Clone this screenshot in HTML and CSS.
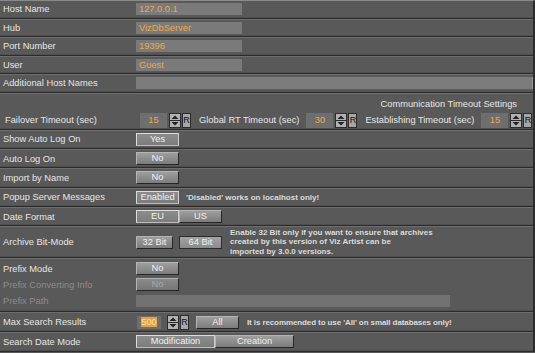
FILE: index.html
```html
<!DOCTYPE html>
<html lang="en">
  <head>
    <meta charset="utf-8" />
    <title>Database Settings</title>
    <link rel="stylesheet" href="styles.css">
  </head>
  <body>
    <div class="panel">
      <div class="row"><div class="label">Host Name</div><div class="field">127.0.0.1</div></div>
      <div class="row"><div class="label">Hub</div><div class="field">VizDbServer</div></div>
      <div class="row"><div class="label">Port Number</div><div class="field">19396</div></div>
      <div class="row"><div class="label">User</div><div class="field">Guest</div></div>
      <div class="row"><div class="label">Additional Host Names</div><div class="field wide"></div></div>

      <!-- timeouts -->
      <div class="row comm">
        <div class="comm-title">Communication Timeout Settings</div>
        <div class="comm-line">
          <span class="label sub">Failover Timeout (sec)</span>
          <span class="spin">
            <span class="num">15</span>
            <svg class="arrows" width="12" height="15" viewBox="0 0 12 15"><rect x="0.5" y="0.5" width="11" height="14" fill="#b2b2b2" stroke="#2c2c2c"/><line x1="1" y1="7.5" x2="11" y2="7.5" stroke="#2c2c2c"/><path d="M2.5 6 L6 2.5 L9.5 6Z" fill="#222"/><path d="M2.5 9 L6 12.5 L9.5 9Z" fill="#222"/></svg>
            <span class="reset">R</span>
          </span>
          <span class="inline-label">Global RT Timeout (sec)</span>
          <span class="spin">
            <span class="num">30</span>
            <svg class="arrows" width="12" height="15" viewBox="0 0 12 15"><rect x="0.5" y="0.5" width="11" height="14" fill="#b2b2b2" stroke="#2c2c2c"/><line x1="1" y1="7.5" x2="11" y2="7.5" stroke="#2c2c2c"/><path d="M2.5 6 L6 2.5 L9.5 6Z" fill="#222"/><path d="M2.5 9 L6 12.5 L9.5 9Z" fill="#222"/></svg>
            <span class="reset">R</span>
          </span>
          <span class="inline-label">Establishing Timeout (sec)</span>
          <span class="spin">
            <span class="num">15</span>
            <svg class="arrows" width="12" height="15" viewBox="0 0 12 15"><rect x="0.5" y="0.5" width="11" height="14" fill="#b2b2b2" stroke="#2c2c2c"/><line x1="1" y1="7.5" x2="11" y2="7.5" stroke="#2c2c2c"/><path d="M2.5 6 L6 2.5 L9.5 6Z" fill="#222"/><path d="M2.5 9 L6 12.5 L9.5 9Z" fill="#222"/></svg>
            <span class="reset">R</span>
          </span>
        </div>
      </div>

      <div class="row tall"><div class="label">Show Auto Log On</div><div class="btn on">Yes</div></div>
      <div class="row tall"><div class="label">Auto Log On</div><div class="btn">No</div></div>
      <div class="row tall"><div class="label">Import by Name</div><div class="btn">No</div></div>
      <div class="row tall">
        <div class="label">Popup Server Messages</div>
        <div class="btn on">Enabled</div>
        <div class="note popup-note">'Disabled' works on localhost only!</div>
      </div>
      <div class="row tall">
        <div class="label">Date Format</div>
        <div class="btn on">EU</div><div class="btn">US</div>
      </div>
      <div class="row archive">
        <div class="label">Archive Bit-Mode</div>
        <div class="btn short">32 Bit</div><div class="btn lit">64 Bit</div>
        <div class="note archive-note">Enable 32 Bit only if you want to ensure that archives<br>created by this version of Viz Artist can be<br>imported by 3.0.0 versions.</div>
      </div>

      <!-- prefix -->
      <div class="row prefix">
        <div class="sub-row"><div class="label">Prefix Mode</div><div class="btn">No</div></div>
        <div class="sub-row off"><div class="label">Prefix Converting Info</div><div class="btn">No</div></div>
        <div class="sub-row off"><div class="label">Prefix Path</div><div class="field path"></div></div>
      </div>

      <div class="row tall">
        <div class="label">Max Search Results</div>
        <span class="spin">
          <span class="num max"><span class="sel">500</span></span>
          <svg class="arrows" width="12" height="15" viewBox="0 0 12 15"><rect x="0.5" y="0.5" width="11" height="14" fill="#b2b2b2" stroke="#2c2c2c"/><line x1="1" y1="7.5" x2="11" y2="7.5" stroke="#2c2c2c"/><path d="M2.5 6 L6 2.5 L9.5 6Z" fill="#222"/><path d="M2.5 9 L6 12.5 L9.5 9Z" fill="#222"/></svg>
          <span class="reset">R</span>
        </span>
        <div class="btn all">All</div>
        <div class="note max-note">It is recommended to use 'All' on small databases only!</div>
      </div>
      <div class="row last">
        <div class="label">Search Date Mode</div>
        <div class="btn on long">Modification</div><div class="btn long">Creation</div>
      </div>
    </div>
  </body>
</html>
```

FILE: styles.css
```css
body {
  margin: 0;
  background-color: #595959;
  font-family: "Liberation Sans", Arial, sans-serif;
  font-size: 9.3px;
  color: #e6e6e6;
}

.panel {
  width: 533px;
  border-right: 2px solid #2c2c2c;
  border-top: 1px solid #8a8a8a;
}

.row {
  display: flex;
  align-items: center;
  box-sizing: border-box;
  height: 18.5px;
  border-top: 1px solid #6e6e6e;
  border-bottom: 1px solid #2c2c2c;
  box-shadow: inset 0 -1px #4f4f4f;
}

.row:first-child {
  border-top: none;
  height: 17.5px;
}

.row.tall {
  height: 19.4px;
}

.row.archive {
  height: 31.5px;
}

.row.last {
  height: 20px;
}

.label {
  flex: none;
  width: 133px;
  padding-left: 3px;
  white-space: nowrap;
}

.field {
  flex: none;
  box-sizing: border-box;
  width: 106px;
  height: 12px;
  padding-left: 3px;
  line-height: 12px;
  background-color: #7a7a7a;
  color: #eba94e;
}

.field.wide {
  width: 397px;
  background-color: #7c7c7c;
  border-right: 1px solid #9a9a9a;
}

.field.path {
  width: 314px;
  background-color: #727272;
}

/* timeouts */

.comm {
  display: block;
  height: 37px;
}

.comm-title {
  text-align: right;
  padding: 4px 16px 0 0;
  height: 12px;
  line-height: 12px;
}

.comm-line {
  display: flex;
  align-items: center;
  margin-top: 3px;
}

.label.sub {
  width: 135px;
  padding-left: 5px;
}

.inline-label {
  margin: 0 7px 0 8px;
  white-space: nowrap;
}

.spin {
  display: flex;
  align-items: center;
  flex: none;
}

.num {
  width: 27px;
  height: 15px;
  line-height: 15px;
  text-align: center;
  background-color: #6e6e6e;
  color: #eba94e;
  margin-right: 2px;
}

.num.max {
  width: 24px;
  height: 13px;
  line-height: 13px;
  margin-left: 1px;
  margin-right: 6px;
}

.sel {
  background-color: #e3a24c;
  color: #fbe39a;
}

.arrows {
  display: block;
  margin-right: 1px;
}

.reset {
  box-sizing: border-box;
  width: 9px;
  height: 15px;
  line-height: 13px;
  text-align: center;
  background-color: #a6a6a6;
  border: 1px solid #2c2c2c;
  color: #111;
  font-size: 9px;
  overflow: hidden;
}

/* buttons */

.btn {
  flex: none;
  box-sizing: border-box;
  width: 43px;
  height: 13px;
  line-height: 11px;
  text-align: center;
  color: #f0f0f0;
  background: linear-gradient(#9e9e9e, #7c7c7c);
  border: 1px solid;
  border-color: #b4b4b4 #262626 #262626 #b4b4b4;
}

.btn.on {
  background: linear-gradient(#8c8c8c, #7c7c7c);
  border-color: #dcdcdc #cfcfcf #bcbcbc #dcdcdc;
}

.btn.lit {
  background: linear-gradient(#a4a4a4, #8a8a8a);
  border-color: #2c2c2c;
}

.btn.short {
  width: 37px;
  margin-right: 6px;
}

.btn.all {
  margin-left: 7px;
}

.btn.long {
  width: 79px;
}

.note {
  font-size: 8px;
  font-weight: bold;
  color: #dcdcdc;
  white-space: nowrap;
}

.popup-note {
  margin-left: 7px;
}

.archive-note {
  margin-left: 8px;
  line-height: 9.5px;
}

.max-note {
  margin-left: 8px;
  letter-spacing: -0.1px;
}

/* prefix */

.prefix {
  display: block;
  height: 54.5px;
  padding-top: 2px;
}

.sub-row {
  display: flex;
  align-items: center;
  height: 16px;
}

.sub-row.off .label {
  color: #8c8c8c;
}

.sub-row.off .btn {
  color: #a8a8a8;
  background: linear-gradient(#8a8a8a, #767676);
}
```
